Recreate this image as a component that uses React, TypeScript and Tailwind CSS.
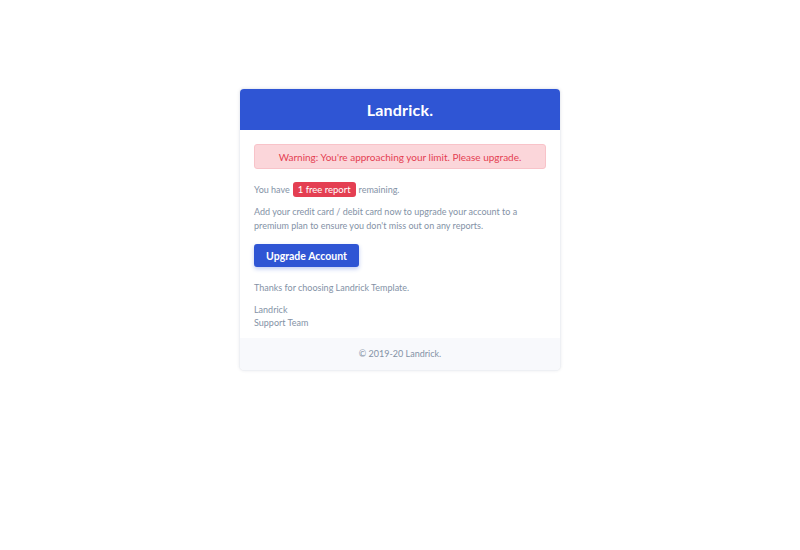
export default function App() {
  return (
    <div className="min-h-[550px] w-full bg-white pt-[88px]" style={{ fontFamily: 'Lato, "Open Sans", sans-serif' }}>
      <div className="mx-auto w-[322px] overflow-hidden rounded-[5px] border border-[#eef0f4] bg-white shadow-[0_0_3px_rgba(60,72,88,0.1)]">
        <div className="flex h-[41px] items-center justify-center bg-[#2f55d4]">
          <span className="text-[16px] font-bold tracking-[0.2px] text-white">Landrick.</span>
        </div>
        <div className="px-[14px] pt-[14px] pb-[9px] text-[9px] leading-[14px] text-[#8492a6]">
          <div className="flex h-[25px] items-center justify-center rounded-[3px] border border-[#f8c3c9] bg-[#fbd6da] text-[10px] text-[#e43f52]">
            Warning: You're approaching your limit. Please upgrade.
          </div>
          <div className="mt-[13px] flex h-[15px] items-center">
            <span>You have</span>
            <span className="mx-[3px] flex h-[15px] items-center rounded-[3px] bg-[#e43f52] px-[5px] text-[9.5px] text-white">1 free report</span>
            <span>remaining.</span>
          </div>
          <p className="mt-[8px]">
            Add your credit card / debit card now to upgrade your account to a premium plan to ensure you don't miss out on any reports.
          </p>
          <div className="mt-[11px]">
            <button className="h-[23px] w-[105px] rounded-[3px] bg-[#2f55d4] text-[10.5px] font-bold text-white shadow-[0_2px_4px_rgba(47,85,212,0.3)]">
              Upgrade Account
            </button>
          </div>
          <p className="mt-[14px]">Thanks for choosing Landrick Template.</p>
          <p className="mt-[8px] leading-[13px]">
            Landrick
            <br />
            Support Team
          </p>
        </div>
        <div className="flex h-[32px] items-center justify-center bg-[#f8f9fc] text-[9px] text-[#8492a6]">
          © 2019-20 Landrick.
        </div>
      </div>
    </div>
  );
}
